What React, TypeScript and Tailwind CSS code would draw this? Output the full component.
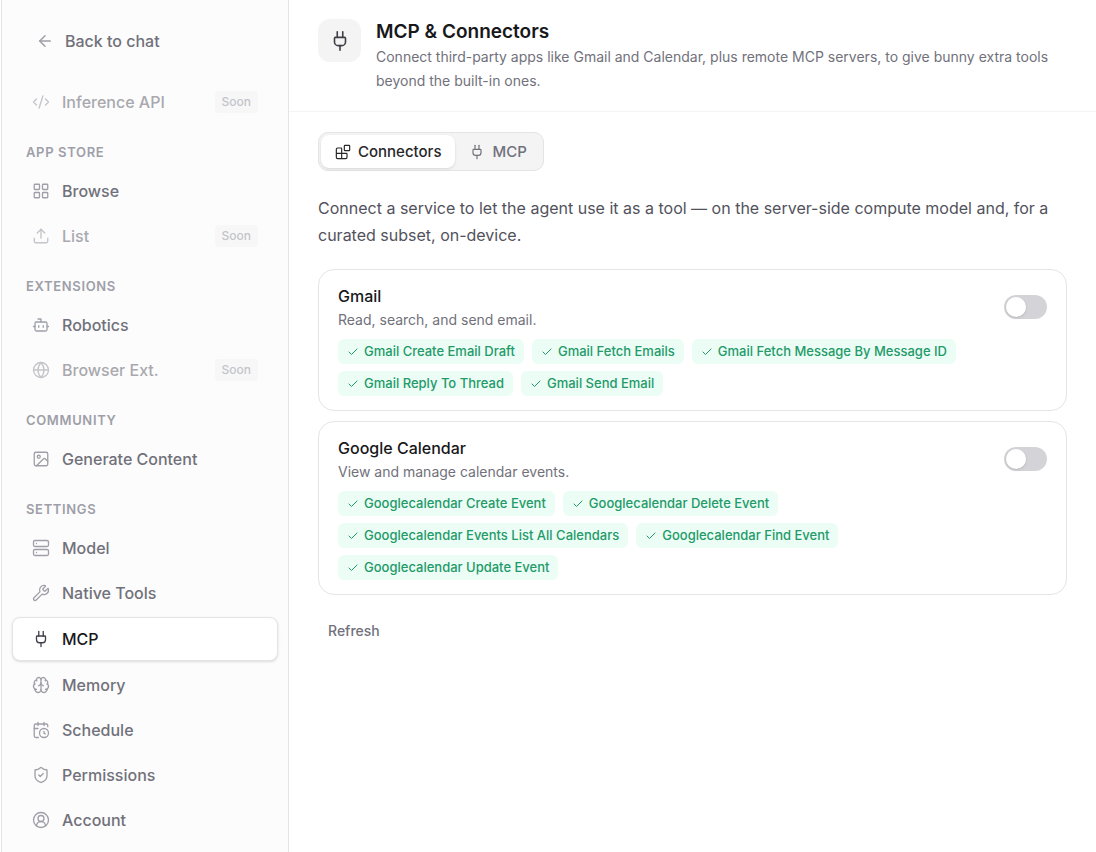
import { useState } from 'react';
import {
  ArrowLeft,
  Blocks,
  Bot,
  Brain,
  CalendarClock,
  Check,
  CircleUserRound,
  CodeXml,
  Globe,
  Image,
  LayoutGrid,
  Plug,
  Server,
  ShieldCheck,
  Upload,
  Wrench,
  type LucideIcon,
} from 'lucide-react';

type NavItem = { label: string; icon: LucideIcon; soon?: boolean; active?: boolean };
type NavSection = { title?: string; items: NavItem[] };

const sections: NavSection[] = [
  { items: [{ label: 'Inference API', icon: CodeXml, soon: true }] },
  {
    title: 'App Store',
    items: [
      { label: 'Browse', icon: LayoutGrid },
      { label: 'List', icon: Upload, soon: true },
    ],
  },
  {
    title: 'Extensions',
    items: [
      { label: 'Robotics', icon: Bot },
      { label: 'Browser Ext.', icon: Globe, soon: true },
    ],
  },
  { title: 'Community', items: [{ label: 'Generate Content', icon: Image }] },
  {
    title: 'Settings',
    items: [
      { label: 'Model', icon: Server },
      { label: 'Native Tools', icon: Wrench },
      { label: 'MCP', icon: Plug, active: true },
      { label: 'Memory', icon: Brain },
      { label: 'Schedule', icon: CalendarClock },
      { label: 'Permissions', icon: ShieldCheck },
      { label: 'Account', icon: CircleUserRound },
    ],
  },
];

const connectors = [
  {
    id: 'gmail',
    name: 'Gmail',
    description: 'Read, search, and send email.',
    tools: [
      'Gmail Create Email Draft',
      'Gmail Fetch Emails',
      'Gmail Fetch Message By Message ID',
      'Gmail Reply To Thread',
      'Gmail Send Email',
    ],
  },
  {
    id: 'googlecalendar',
    name: 'Google Calendar',
    description: 'View and manage calendar events.',
    tools: [
      'Googlecalendar Create Event',
      'Googlecalendar Delete Event',
      'Googlecalendar Events List All Calendars',
      'Googlecalendar Find Event',
      'Googlecalendar Update Event',
    ],
  },
];

function NavLink({ label, icon: Icon, soon, active }: NavItem) {
  return (
    <a
      href="#"
      aria-disabled={soon}
      aria-current={active ? 'page' : undefined}
      className={`flex items-center gap-3 rounded-lg px-[19px] py-[9px] text-base font-medium ${
        active ? 'border border-zinc-200 bg-white text-zinc-900 shadow-sm' : 'border-x border-transparent text-zinc-500'
      } ${soon ? 'opacity-60' : ''}`}
    >
      <Icon className={`size-[18px] ${active ? 'text-zinc-700' : 'text-zinc-400'}`} strokeWidth={1.75} />
      <span className="flex-1">{label}</span>
      {soon && (
        <span className="rounded bg-zinc-100 px-[7px] py-0.5 text-xs leading-[18px] text-zinc-400">Soon</span>
      )}
    </a>
  );
}

function Sidebar() {
  return (
    <aside className="w-72 shrink-0 border-x border-zinc-200 bg-[#fcfcfc] px-[10px] pb-2">
      <a href="#" className="flex items-center gap-[11px] px-6 pt-[29px] pb-7 text-base font-medium text-zinc-500">
        <ArrowLeft className="size-[18px] text-zinc-400" strokeWidth={2} />
        Back to chat
      </a>
      <nav>
        {sections.map((section) => (
          <div key={section.items[0].label}>
            {section.title && (
              <h2 className="px-[14px] pt-[19px] pb-2 text-[13px] leading-5 font-semibold tracking-wider text-zinc-400 uppercase">
                {section.title}
              </h2>
            )}
            <div className="flex flex-col gap-[3px]">
              {section.items.map((item) => (
                <NavLink key={item.label} {...item} />
              ))}
            </div>
          </div>
        ))}
      </nav>
    </aside>
  );
}

function Toggle({ label, checked, onChange }: { label: string; checked: boolean; onChange: () => void }) {
  return (
    <label className="relative mt-[11px] flex h-6 shrink-0 cursor-pointer">
      <input type="checkbox" role="switch" aria-label={label} checked={checked} onChange={onChange} className="peer sr-only" />
      <span className="flex h-6 w-[43px] rounded-full bg-zinc-300 p-0.5 peer-checked:justify-end peer-checked:bg-emerald-500">
        <span className="size-5 rounded-full bg-white shadow-sm" />
      </span>
    </label>
  );
}

export default function App() {
  const [tab, setTab] = useState('connectors');
  const [enabled, setEnabled] = useState<Record<string, boolean>>({});

  const tabs = [
    { id: 'connectors', label: 'Connectors', icon: Blocks },
    { id: 'mcp', label: 'MCP', icon: Plug },
  ];

  return (
    <div className="flex min-h-screen bg-white pl-px font-['Inter',sans-serif] text-zinc-900">
      <Sidebar />
      <main className="min-w-0 flex-1">
        <header className="flex gap-[15px] border-b border-zinc-100 px-[29px] pt-[19px] pb-[18px]">
          <div className="flex size-[43px] shrink-0 items-center justify-center rounded-xl bg-zinc-100">
            <Plug className="size-[22px] text-zinc-700" strokeWidth={1.75} />
          </div>
          <div>
            <h1 className="text-[19px] leading-[26px] font-semibold">MCP &amp; Connectors</h1>
            <p className="text-sm leading-6 text-zinc-500">
              Connect third-party apps like Gmail and Calendar, plus remote MCP servers, to give bunny extra tools beyond the
              built-in ones.
            </p>
          </div>
        </header>

        <div className="px-[29px] py-5">
          <div role="tablist" className="flex w-fit rounded-[10px] border border-zinc-200 bg-zinc-100 p-0.5">
            {tabs.map(({ id, label, icon: Icon }) => (
              <button
                key={id}
                role="tab"
                aria-selected={tab === id}
                onClick={() => setTab(id)}
                className={`flex items-center gap-[7px] rounded-lg px-[14px] py-[6px] text-[15px] leading-[21px] font-medium ${
                  tab === id ? 'bg-white text-zinc-800 shadow-sm' : 'text-zinc-500'
                }`}
              >
                <Icon className="size-4" strokeWidth={1.75} />
                {label}
              </button>
            ))}
          </div>

          <p className="mt-6 text-base leading-[27px] text-zinc-600">
            Connect a service to let the agent use it as a tool — on the server-side compute model and, for a curated subset,
            on-device.
          </p>

          <div className="mt-5 flex flex-col gap-[10px]">
            {connectors.map((c) => (
              <section key={c.id} className="flex justify-between gap-4 rounded-2xl border border-zinc-200 px-[19px] py-[14px]">
                <div>
                  <h2 className="text-base leading-6 font-medium">{c.name}</h2>
                  <p className="text-sm leading-6 text-zinc-500">{c.description}</p>
                  <ul className="mt-[7px] flex max-w-[640px] flex-wrap gap-x-2 gap-y-[7px]">
                    {c.tools.map((tool) => (
                      <li
                        key={tool}
                        className="flex items-center gap-[5px] rounded-md bg-emerald-50 px-[9px] py-0.5 text-[13px] leading-[21px] font-medium text-[#239a69]"
                      >
                        <Check className="size-3" strokeWidth={2} />
                        {tool}
                      </li>
                    ))}
                  </ul>
                </div>
                <Toggle
                  label={c.name}
                  checked={!!enabled[c.id]}
                  onChange={() => setEnabled({ ...enabled, [c.id]: !enabled[c.id] })}
                />
              </section>
            ))}
          </div>

          <button className="mt-[22px] px-[10px] py-1 text-sm font-medium text-zinc-500">Refresh</button>
        </div>
      </main>
    </div>
  );
}
